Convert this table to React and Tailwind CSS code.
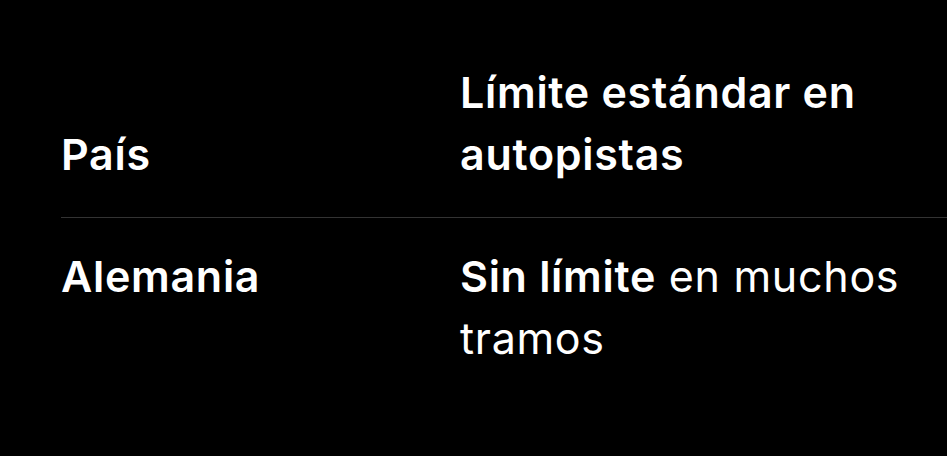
import React from 'react';

const rows = [
  { country: 'Alemania', bold: 'Sin límite', rest: ' en muchos tramos' },
];

export default function App() {
  return (
    <div
      className="w-[947px] h-[456px] bg-black text-white overflow-hidden pl-[61px] pt-[61px]"
      style={{ fontFamily: 'Inter, "Noto Sans", sans-serif' }}
    >
      <div className="w-[886px] text-[43px] leading-[62px] tracking-[0.7px]">
        {/* Header */}
        <div className="grid grid-cols-[399px_1fr] border-b-[1.5px] border-[#333333] pb-[32px]">
          <div className="font-semibold self-end">País</div>
          <div className="font-semibold pr-[20px]">Límite estándar en autopistas</div>
        </div>

        {/* Rows */}
        {rows.map((r) => (
          <div key={r.country} className="grid grid-cols-[399px_1fr] pt-[27px]">
            <div className="font-semibold">{r.country}</div>
            <div className="pr-[20px]">
              <span className="font-semibold">{r.bold}</span>
              {r.rest}
            </div>
          </div>
        ))}
      </div>
    </div>
  );
}
